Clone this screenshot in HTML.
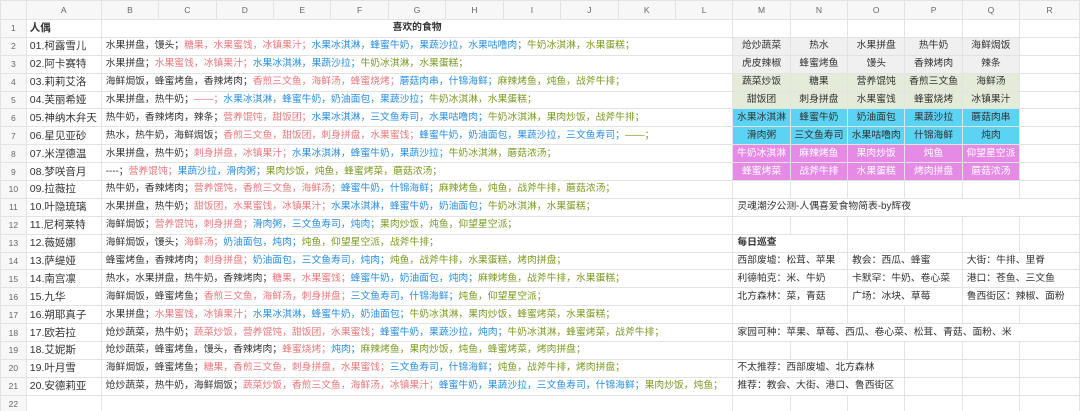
<!DOCTYPE html>
<html><head><meta charset="utf-8">
<style>
html,body{margin:0;padding:0;background:#fff;width:1080px;height:411px;overflow:hidden}
table{border-collapse:collapse;table-layout:fixed;font-family:"Liberation Sans","Noto Sans CJK SC",sans-serif;font-size:9.8px;color:#333}
td{border:1px solid #e3e3e3;height:16.9px;padding:0 0 0 4px;white-space:nowrap;overflow:hidden;line-height:16px}
tr.h td{height:18px;background:#f7f7f7;color:#666;text-align:center;font-size:8.5px;padding:0}
td.n{background:#f7f7f7;color:#666;text-align:center;font-size:8.5px;padding:0}
td.a{font-size:10.5px;padding-left:3px}
.r{color:#e8787c}.b{color:#2a8ee0}.g{color:#7b9a22}
.c{text-align:center;padding:0}
.w{background:#f0f0f0}.lg{background:#e4ebd9}.cy{background:#5dd3f3}.pk{background:#e58be6;color:#fff}
.bo{font-weight:bold}
</style></head><body>
<table>
<colgroup><col style="width:26px"><col style="width:75px">
<col style="width:57.45px"><col style="width:57.45px"><col style="width:57.45px"><col style="width:57.45px"><col style="width:57.45px"><col style="width:57.45px"><col style="width:57.45px"><col style="width:57.45px"><col style="width:57.45px"><col style="width:57.45px"><col style="width:57.45px">
<col style="width:57.4px"><col style="width:57.4px"><col style="width:57.4px"><col style="width:57.4px"><col style="width:57.4px"><col style="width:60px"></colgroup>
<tr class="h"><td></td><td>A</td><td>B</td><td>C</td><td>D</td><td>E</td><td>F</td><td>G</td><td>H</td><td>I</td><td>J</td><td>K</td><td>L</td><td>M</td><td>N</td><td>O</td><td>P</td><td>Q</td><td>R</td></tr>
<tr><td class="n">1</td><td class="a bo">人偶</td><td colspan="11" class="c bo">喜欢的食物</td><td></td><td></td><td></td><td></td><td></td><td></td></tr>
<tr><td class="n">2</td><td class="a">01.柯露雪儿</td><td colspan="11">水果拼盘，馒头；<span class="r">糖果，水果蜜饯，冰镇果汁；</span><span class="b">水果冰淇淋，蜂蜜牛奶，果蔬沙拉，水果咕噜肉；</span><span class="g">牛奶冰淇淋，水果蛋糕；</span></td><td class="c w">炝炒蔬菜</td><td class="c w">热水</td><td class="c w">水果拼盘</td><td class="c w">热牛奶</td><td class="c w">海鲜焗饭</td><td></td></tr>
<tr><td class="n">3</td><td class="a">02.阿卡赛特</td><td colspan="11">水果拼盘；<span class="r">水果蜜饯，冰镇果汁；</span><span class="b">水果冰淇淋，果蔬沙拉；</span><span class="g">牛奶冰淇淋，水果蛋糕；</span></td><td class="c w">虎皮辣椒</td><td class="c w">蜂蜜烤鱼</td><td class="c w">馒头</td><td class="c w">香辣烤肉</td><td class="c w">辣条</td><td></td></tr>
<tr><td class="n">4</td><td class="a">03.莉莉艾洛</td><td colspan="11">海鲜焗饭，蜂蜜烤鱼，香辣烤肉；<span class="r">香煎三文鱼，海鲜汤，蜂蜜烧烤；</span><span class="b">蘑菇肉串，什锦海鲜；</span><span class="g">麻辣烤鱼，炖鱼，战斧牛排；</span></td><td class="c lg">蔬菜炒饭</td><td class="c lg">糖果</td><td class="c lg">营养馄饨</td><td class="c lg">香煎三文鱼</td><td class="c lg">海鲜汤</td><td></td></tr>
<tr><td class="n">5</td><td class="a">04.芙丽希娅</td><td colspan="11">水果拼盘，热牛奶；<span class="r">——；</span><span class="b">水果冰淇淋，蜂蜜牛奶，奶油面包，果蔬沙拉；</span><span class="g">牛奶冰淇淋，水果蛋糕；</span></td><td class="c lg">甜饭团</td><td class="c lg">刺身拼盘</td><td class="c lg">水果蜜饯</td><td class="c lg">蜂蜜烧烤</td><td class="c lg">冰镇果汁</td><td></td></tr>
<tr><td class="n">6</td><td class="a">05.神纳木弁天</td><td colspan="11">热牛奶，香辣烤肉，辣条；<span class="r">营养馄饨，甜饭团；</span><span class="b">水果冰淇淋，三文鱼寿司，水果咕噜肉；</span><span class="g">牛奶冰淇淋，果肉炒饭，战斧牛排；</span></td><td class="c cy">水果冰淇淋</td><td class="c cy">蜂蜜牛奶</td><td class="c cy">奶油面包</td><td class="c cy">果蔬沙拉</td><td class="c cy">蘑菇肉串</td><td></td></tr>
<tr><td class="n">7</td><td class="a">06.星见亚砂</td><td colspan="11">热水，热牛奶，海鲜焗饭；<span class="r">香煎三文鱼，甜饭团，刺身拼盘，水果蜜饯；</span><span class="b">蜂蜜牛奶，奶油面包，果蔬沙拉，三文鱼寿司；</span><span class="g">——；</span></td><td class="c cy">滑肉粥</td><td class="c cy">三文鱼寿司</td><td class="c cy">水果咕噜肉</td><td class="c cy">什锦海鲜</td><td class="c cy">炖肉</td><td></td></tr>
<tr><td class="n">8</td><td class="a">07.米涅德温</td><td colspan="11">水果拼盘，热牛奶；<span class="r">刺身拼盘，冰镇果汁；</span><span class="b">水果冰淇淋，蜂蜜牛奶，果蔬沙拉；</span><span class="g">牛奶冰淇淋，蘑菇浓汤；</span></td><td class="c pk">牛奶冰淇淋</td><td class="c pk">麻辣烤鱼</td><td class="c pk">果肉炒饭</td><td class="c pk">炖鱼</td><td class="c pk">仰望星空派</td><td></td></tr>
<tr><td class="n">9</td><td class="a">08.梦咲音月</td><td colspan="11">----；<span class="r">营养馄饨；</span><span class="b">果蔬沙拉，滑肉粥；</span><span class="g">果肉炒饭，炖鱼，蜂蜜烤菜，蘑菇浓汤；</span></td><td class="c pk">蜂蜜烤菜</td><td class="c pk">战斧牛排</td><td class="c pk">水果蛋糕</td><td class="c pk">烤肉拼盘</td><td class="c pk">蘑菇浓汤</td><td></td></tr>
<tr><td class="n">10</td><td class="a">09.拉薇拉</td><td colspan="11">热牛奶，香辣烤肉；<span class="r">营养馄饨，香煎三文鱼，海鲜汤；</span><span class="b">蜂蜜牛奶，什锦海鲜；</span><span class="g">麻辣烤鱼，炖鱼，战斧牛排，蘑菇浓汤；</span></td><td></td><td></td><td></td><td></td><td></td><td></td></tr>
<tr><td class="n">11</td><td class="a">10.叶隐琉璃</td><td colspan="11">水果拼盘，热牛奶；<span class="r">甜饭团，水果蜜饯，冰镇果汁；</span><span class="b">水果冰淇淋，蜂蜜牛奶，奶油面包；</span><span class="g">牛奶冰淇淋，水果蛋糕；</span></td><td colspan="6">灵魂潮汐公测-人偶喜爱食物简表-by辉夜</td></tr>
<tr><td class="n">12</td><td class="a">11.尼柯莱特</td><td colspan="11">海鲜焗饭；<span class="r">营养馄饨，刺身拼盘；</span><span class="b">滑肉粥，三文鱼寿司，炖肉；</span><span class="g">果肉炒饭，炖鱼，仰望星空派；</span></td><td></td><td></td><td></td><td></td><td></td><td></td></tr>
<tr><td class="n">13</td><td class="a">12.薇姬娜</td><td colspan="11">海鲜焗饭，馒头；<span class="r">海鲜汤；</span><span class="b">奶油面包，炖肉；</span><span class="g">炖鱼，仰望星空派，战斧牛排；</span></td><td colspan="2" class="bo">每日巡查</td><td></td><td></td><td></td><td></td></tr>
<tr><td class="n">14</td><td class="a">13.萨缇娅</td><td colspan="11">蜂蜜烤鱼，香辣烤肉；<span class="r">刺身拼盘；</span><span class="b">奶油面包，三文鱼寿司，炖肉；</span><span class="g">炖鱼，战斧牛排，水果蛋糕，烤肉拼盘；</span></td><td colspan="2">西部废墟：松茸、苹果</td><td colspan="2">教会：西瓜、蜂蜜</td><td colspan="2">大街：牛排、里脊</td></tr>
<tr><td class="n">15</td><td class="a">14.南宫凛</td><td colspan="11">热水，水果拼盘，热牛奶，香辣烤肉；<span class="r">糖果，水果蜜饯；</span><span class="b">蜂蜜牛奶，奶油面包，炖肉；</span><span class="g">麻辣烤鱼，战斧牛排，水果蛋糕；</span></td><td colspan="2">利德帕克：米、牛奶</td><td colspan="2">卡默罕：牛奶、卷心菜</td><td colspan="2">港口：苍鱼、三文鱼</td></tr>
<tr><td class="n">16</td><td class="a">15.九华</td><td colspan="11">海鲜焗饭，蜂蜜烤鱼；<span class="r">香煎三文鱼，海鲜汤，刺身拼盘；</span><span class="b">三文鱼寿司，什锦海鲜；</span><span class="g">炖鱼，仰望星空派；</span></td><td colspan="2">北方森林：菜，青菇</td><td colspan="2">广场：冰块、草莓</td><td colspan="2">鲁西街区：辣椒、面粉</td></tr>
<tr><td class="n">17</td><td class="a">16.朔耶真子</td><td colspan="11">水果拼盘；<span class="r">水果蜜饯，冰镇果汁；</span><span class="b">水果冰淇淋，蜂蜜牛奶，奶油面包；</span><span class="g">牛奶冰淇淋，果肉炒饭，蜂蜜烤菜，水果蛋糕；</span></td><td></td><td></td><td></td><td></td><td></td><td></td></tr>
<tr><td class="n">18</td><td class="a">17.欧若拉</td><td colspan="11">炝炒蔬菜，热牛奶；<span class="r">蔬菜炒饭，营养馄饨，甜饭团，水果蜜饯；</span><span class="b">蜂蜜牛奶，果蔬沙拉，炖肉；</span><span class="g">牛奶冰淇淋，蜂蜜烤菜，战斧牛排；</span></td><td colspan="6">家园可种：苹果、草莓、西瓜、卷心菜、松茸、青菇、面粉、米</td></tr>
<tr><td class="n">19</td><td class="a">18.艾妮斯</td><td colspan="11">炝炒蔬菜，蜂蜜烤鱼，馒头，香辣烤肉；<span class="r">蜂蜜烧烤；</span><span class="b">炖肉；</span><span class="g">麻辣烤鱼，果肉炒饭，炖鱼，蜂蜜烤菜，烤肉拼盘；</span></td><td></td><td></td><td></td><td></td><td></td><td></td></tr>
<tr><td class="n">20</td><td class="a">19.叶月雪</td><td colspan="11">海鲜焗饭，蜂蜜烤鱼；<span class="r">糖果，香煎三文鱼，刺身拼盘，水果蜜饯；</span><span class="b">三文鱼寿司，什锦海鲜；</span><span class="g">炖鱼，战斧牛排，烤肉拼盘；</span></td><td colspan="3">不太推荐：西部废墟、北方森林</td><td></td><td></td><td></td></tr>
<tr><td class="n">21</td><td class="a">20.安德莉亚</td><td colspan="11">炝炒蔬菜，热牛奶，海鲜焗饭；<span class="r">蔬菜炒饭，香煎三文鱼，海鲜汤，冰镇果汁；</span><span class="b">蜂蜜牛奶，果蔬沙拉，三文鱼寿司，什锦海鲜；</span><span class="g">果肉炒饭，炖鱼；</span></td><td colspan="3">推荐：教会、大街、港口、鲁西街区</td><td></td><td></td><td></td></tr>
<tr><td class="n">22</td><td></td><td colspan="11"></td><td></td><td></td><td></td><td></td><td></td><td></td></tr>
</table>
</body></html>
